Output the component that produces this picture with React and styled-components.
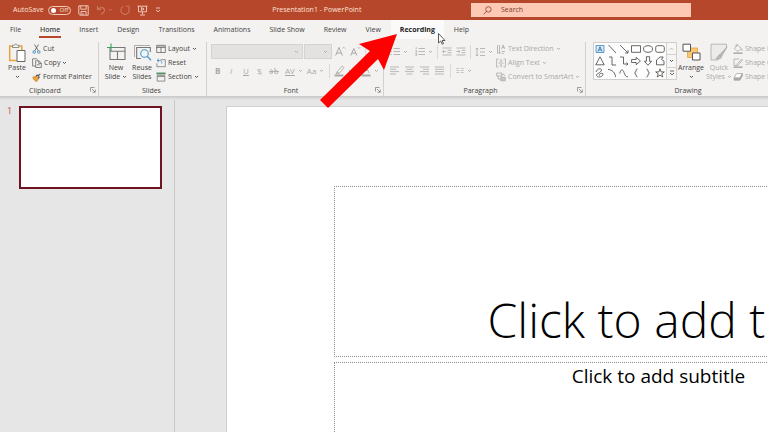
import React from "react";
import styled, { createGlobalStyle, css } from "styled-components";

const ink = "#444341";
const faded = "#a9a8a6";
const line = "#d2d0ce";

const GlobalStyle = createGlobalStyle`
  *, *::before, *::after { box-sizing: border-box; }
  html, body, #root { height: 100%; }
  body {
    margin: 0;
    overflow: hidden;
    background: #e6e6e6;
    color: ${ink};
    font: 7px/10px "Open Sans", "Noto Sans", sans-serif;
  }
  button, input, select { font: inherit; color: inherit; }
  button { padding: 0; border: 0; background: none; cursor: pointer; white-space: nowrap; }
  h1, h2, p { margin: 0; font-weight: inherit; }
`;

const Window = styled.div`
  position: relative;
  display: flex;
  flex-direction: column;
  min-height: 100vh;
  height: 100%;
  overflow: hidden;
`;

/* ---------- title bar ---------- */

const TitleBar = styled.header`
  display: flex;
  align-items: center;
  flex: none;
  height: 20px;
  padding-right: 77px;
  background: #b7472a;
  color: #fbe3da;
`;

const QuickAccess = styled.div`
  display: flex;
  align-items: center;
  gap: 7px;
  padding-left: 13px;
`;

const AutoSave = styled.label`
  display: flex;
  align-items: center;
  gap: 4px;
  white-space: nowrap;
`;

const Toggle = styled.span`
  display: flex;
  align-items: center;
  gap: 4px;
  width: 23px;
  height: 9px;
  padding: 0 2px;
  border: 1px solid #f1c9bb;
  border-radius: 5px;
  font-size: 6px;
`;

const ToggleInput = styled.input`
  appearance: none;
  flex: none;
  width: 5px;
  height: 5px;
  margin: 0;
  border-radius: 50%;
  background: #fff;
`;

const IconButton = styled.button`
  display: flex;
  align-items: center;
  gap: 2px;
  opacity: ${(p) => (p.$dim ? 0.3 : 1)};
`;

const DocumentName = styled.h1`
  flex: 1;
  padding-left: 2px;
  font-size: 7px;
  text-align: center;
`;

const SearchBox = styled.label`
  display: flex;
  align-items: center;
  gap: 9px;
  flex: 0 1 220px;
  height: 14px;
  padding-left: 12px;
  background: #fdc9b5;
  color: #8a3a26;
`;

const SearchInput = styled.input`
  flex: 1;
  min-width: 0;
  padding: 0;
  border: 0;
  outline: 0;
  background: none;
  &::placeholder { color: #7c3a2b; opacity: 1; }
`;

/* ---------- tabs ---------- */

const TabStrip = styled.nav`
  display: flex;
  gap: 1px;
  flex: none;
  height: 19px;
  padding-left: 1px;
  background: #f3f2f1;
`;

const Tab = styled.button`
  display: flex;
  align-items: center;
  padding: 0 8px;
  ${(p) => p.$hover && css`
    background: #fbfafa;
    color: #222;
    font-weight: 700;
  `}
  ${(p) => p.$active && css`font-weight: 600;`}
`;

const TabText = styled.span`
  padding: 3px 1px 1px;
  line-height: 10px;
  border-bottom: 2px solid ${(p) => (p.$active ? "#b7472a" : "transparent")};
`;

/* ---------- ribbon ---------- */

const Ribbon = styled.section`
  position: relative;
  display: flex;
  flex: none;
  height: 57px;
  background: #f3f2f1;
  overflow: hidden;
`;

const RibbonEdge = styled.div`
  flex: none;
  height: 4px;
  background: linear-gradient(#c9c8c7, #e6e6e6);
`;

const Group = styled.section`
  display: flex;
  flex-direction: column;
  justify-content: space-between;
  flex: 0 0 ${(p) => p.$width}px;
  margin: 3px 0 0;
  border-right: 1px solid ${line};
`;

const GroupBody = styled.div`
  display: flex;
  align-items: flex-start;
  gap: ${(p) => p.$gap || 0}px;
  padding-left: ${(p) => p.$pad || 0}px;
  height: 43px;
`;

const GroupFooter = styled.footer`
  display: flex;
  align-items: center;
  padding-right: 2px;
  height: 10px;
`;

const GroupName = styled.h2`
  flex: 1;
  font-size: 7px;
  text-align: center;
`;

const BigButton = styled.button`
  display: flex;
  flex-direction: column;
  align-items: center;
  width: ${(p) => p.$width || 24}px;
  color: ${(p) => (p.disabled ? faded : "inherit")};
`;

const BigArt = styled.span`
  display: flex;
  align-items: flex-start;
  height: 21px;
  padding-top: 1px;
`;

const BigLabel = styled.span`
  display: flex;
  align-items: center;
  justify-content: center;
  gap: 2px;
  min-height: 9px;
  line-height: 9px;
`;

const Stack = styled.div`
  display: flex;
  flex-direction: column;
`;

const RowButton = styled.button`
  display: flex;
  align-items: center;
  gap: 2px;
  height: 14px;
  color: ${(p) => (p.disabled ? faded : "inherit")};
`;

const ToolRow = styled.div`
  display: flex;
  align-items: center;
  gap: ${(p) => p.$gap || 0}px;
  height: 19px;
  padding-left: ${(p) => p.$pad || 0}px;
  color: ${faded};
`;

const Tool = styled.button`
  display: flex;
  align-items: center;
  justify-content: flex-start;
  gap: 3px;
  min-width: ${(p) => p.$width || 10}px;
  padding-left: ${(p) => p.$inset || 0}px;
  font-size: 8px;
  font-weight: ${(p) => (p.$bold ? 700 : 400)};
  font-style: ${(p) => (p.$italic ? "italic" : "normal")};
  text-decoration: ${(p) => p.$decoration || "none"};
  text-shadow: ${(p) => (p.$shadow ? "1px 1px 1px #ccc" : "none")};
  color: ${faded};
`;

const Divider = styled.span`
  width: 1px;
  height: 14px;
  background: #dad9d8;
`;

const ComboWrap = styled.label`
  display: flex;
  align-items: center;
  width: ${(p) => p.$width}px;
  height: 15px;
  padding-right: 3px;
  border: 1px solid #d4d3d2;
  background: #e3e2e1;
`;

const Combo = styled.select`
  appearance: none;
  flex: 1;
  min-width: 0;
  height: 100%;
  padding: 0;
  border: 0;
  background: transparent;
`;

const Gallery = styled.div`
  display: flex;
  width: 84px;
  height: 38px;
  border: 1px solid #d0cfce;
  background: #fdfdfd;
`;

const ShapeGrid = styled.div`
  display: grid;
  grid-template-columns: repeat(6, 12px);
  grid-auto-rows: 12px;
  flex: 1;
`;

const ShapeButton = styled.button`
  display: grid;
  place-items: center;
`;

const GalleryScroll = styled.div`
  display: grid;
  grid-template-rows: repeat(3, 1fr);
  gap: 1px;
  width: 10px;
  border-left: 1px solid ${line};
  background: ${line};
`;

const ScrollButton = styled.button`
  display: grid;
  place-items: center;
  background: #f7f6f5;
  color: ${(p) => (p.disabled ? faded : ink)};
`;

/* ---------- workspace ---------- */

const Workspace = styled.main`
  display: flex;
  flex: 1;
  min-height: 0;
`;

const ThumbPane = styled.aside`
  display: flex;
  align-items: flex-start;
  gap: 6px;
  flex: 0 0 175px;
  padding: 6px 0 0 7px;
  border-right: 1px solid #c9c9c9;
`;

const ThumbNumber = styled.span`
  width: 6px;
  color: #d0533f;
  font-size: 9px;
`;

const Thumb = styled.button`
  width: 143px;
  aspect-ratio: 143 / 83;
  border: 2px solid #6e1420;
  background: #fff;
`;

const Canvas = styled.div`
  flex: 1;
  min-width: 0;
  padding: 6px 0 0 51px;
  overflow: hidden;
`;

const Slide = styled.article`
  display: flex;
  flex-direction: column;
  gap: 5px;
  width: 865px;
  aspect-ratio: 16 / 9;
  padding: 79px 107px;
  border: 1px solid #cfcfcf;
  background: #fff;
  color: #000;
`;

const Placeholder = styled.div`
  display: flex;
  justify-content: center;
  align-items: ${(p) => p.$align};
  height: ${(p) => p.$height}px;
  flex: none;
  border: 1px dotted #8c8c8c;
  padding-bottom: ${(p) => p.$bottom || 0}px;
`;

const SlideTitle = styled.h1`
  font: 300 48px/60px "Open Sans", "Noto Sans", sans-serif;
  white-space: nowrap;
`;

const SlideSubtitle = styled.p`
  font: 400 19px/26px "Open Sans", "Noto Sans", sans-serif;
  white-space: nowrap;
`;

const Overlay = styled.svg`
  position: absolute;
  left: 316px;
  top: 28px;
  pointer-events: none;
`;

/* ---------- icons ---------- */

const Svg = ({ w = 10, h = 10, children, stroke = "currentColor", ...rest }) => (
  <svg width={w} height={h} viewBox={`0 0 ${w} ${h}`} fill="none" stroke={stroke} strokeWidth="0.8" aria-hidden="true" {...rest}>
    {children}
  </svg>
);

const Chevron = () => (
  <Svg w={5} h={4}><path d="M1 1l1.5 1.5L4 1" strokeWidth="0.9" /></Svg>
);

const Launcher = () => (
  <Svg w={6} h={6} stroke="#777"><path d="M.5 4.5v-4h4M2 2l3 3M5.3 2.5v2.8H2.5" strokeWidth="0.7" /></Svg>
);

const SaveIcon = () => (
  <Svg w={11} h={11}><path d="M.8.8h9.4v9.4H2L.8 9zM2.8 1v3.2h5.4V1M3 10V6.5h5V10M5 8v1.8" /></Svg>
);
const UndoIcon = () => (
  <Svg w={10} h={10}><path d="M1.5 1v3.5H5M1.8 4.3C4 1.6 8.6 2.2 8.5 5.5 8.4 7.4 6.5 8.5 5 9.5" strokeWidth="1.1" /></Svg>
);
const RedoIcon = () => (
  <Svg w={10} h={10}><path d="M6 1.2h3v3M8.6 3.2A4.1 4.1 0 1 1 3.4 1.5" strokeWidth="1.1" /></Svg>
);
const PresentIcon = () => (
  <Svg w={11} h={11}>
    <path d="M.5 1.2h10M1.5 1.2v5.6h8V1.2M5.5 7v2.5M3 10h5" />
    <path d="M4.5 2.5v3l2.6-1.5z" />
  </Svg>
);
const CustomizeIcon = () => (
  <Svg w={6} h={6}><path d="M1 1h4M1 3l2 1.8L5 3" /></Svg>
);
const SearchIcon = () => (
  <Svg w={9} h={9}><circle cx="5.4" cy="3.4" r="2.7" /><path d="M3.5 5.4L.7 8.3" /></Svg>
);

const PasteIcon = () => (
  <Svg w={18} h={20}>
    <path d="M4.5 3H1.7v14.5h8" stroke="#e7a33b" strokeWidth="1.5" />
    <path d="M11 3h2.8v4" stroke="#e7a33b" strokeWidth="1.5" />
    <path d="M4.5 4.5V2.3h1.7C6.5.8 9 .8 9.3 2.3H11v2.2z" fill="#f3f2f1" stroke="#777" />
    <path d="M9 7.5h8v11H9z" fill="#fff" stroke="#666" strokeWidth="1" />
  </Svg>
);
const CutIcon = () => (
  <Svg w={9} h={10}>
    <path d="M2.5.5l3.8 6.3M6.5.5L2.7 6.8" stroke="#555" />
    <circle cx="2.2" cy="8" r="1.3" stroke="#3a82bd" /><circle cx="6.8" cy="8" r="1.3" stroke="#3a82bd" />
  </Svg>
);
const CopyIcon = () => (
  <Svg w={10} h={10} stroke="#666"><path d="M3.5 8H.6V.8h4l1 1M3.7 2.8H7L9.3 5v4.5H3.7zM6.8 3v2.4h2.5M5 6.8h2.6" /></Svg>
);
const PainterIcon = () => (
  <Svg w={9} h={9}>
    <path d="M.8 4.2l3.5-1 2.2 2.6-1.8 2.7C2.9 8 1.4 6.5.8 4.2z" fill="#eda43c" stroke="#c57e22" />
    <path d="M4 3l1.2-1 2 2.2-.9 1.1M6.3 2.7L8.3.8" stroke="#555" strokeWidth="1.1" />
  </Svg>
);
const NewSlideIcon = () => (
  <Svg w={19} h={18}>
    <path d="M3 4.5h15v12H3zM3 8.2h15M10.5 8.2v8.3" stroke="#777" strokeWidth="1.1" />
    <path d="M4 .5v8M0 4.5h8" stroke="#3f9f5c" strokeWidth="1.1" />
  </Svg>
);
const ReuseIcon = () => (
  <Svg w={19} h={18}>
    <path d="M1.5 14V2.5H17" stroke="#999" />
    <path d="M8 15.5H3.7v-11h13.6V9" stroke="#777" strokeWidth="1.1" />
    <circle cx="11.5" cy="10.5" r="3.8" fill="#eef6fb" stroke="#4d9ac4" strokeWidth="1.1" />
    <path d="M14.2 13.3l3.8 3.9" stroke="#4d9ac4" strokeWidth="1.3" />
  </Svg>
);
const LayoutIcon = () => (
  <Svg w={10} h={10} stroke="#666"><path d="M.7 1.3h8.6v7.2H.7zM.7 3.5h8.6M5 3.5v5" /><path d="M1 2.3h8" stroke="#999" /></Svg>
);
const ResetIcon = () => (
  <Svg w={10} h={10} stroke="#777">
    <path d="M4.5 1.7h4.8v7H.9V5.4" /><path d="M3 .8L1 2.5l2 1.7M1.2 2.5h2.3c2 0 2.6 1.5 2.2 3" stroke="#3b86c0" />
  </Svg>
);
const SectionIcon = () => (
  <Svg w={10} h={10} stroke="#777">
    <path d="M.7.8h8.6v1.4H.7z" fill="#58906a" stroke="#58906a" strokeWidth="0.5" />
    <path d="M1.2 3.6h7.6v5.5H1.2zM1.2 4.6h7.6" />
  </Svg>
);

const FontSizeIcon = ({ down }) => (
  <Svg w={11} h={11}>
    <path d={down ? "M.8 9.5L3.8 2.5l3 7M1.8 7.2h4" : "M.6 9.5L4 1.5l3.4 8M1.8 7h4.4"} strokeWidth="1" />
    <path d={down ? "M7.5 1.2L8.8 2.5l1.3-1.3" : "M7.5 2.5l1.3-1.3 1.3 1.3"} />
  </Svg>
);
const StrikeIcon = () => (
  <Svg w={10} h={8}><path d="M0 4.5h10" /><path d="M1 3.2c1-.9 2.3-.5 2.3.7v2.6M3.3 4.5c-3-.2-3.2 2-1.4 2 .8 0 1.4-.5 1.4-1.2M5.8.8v5.7M5.8 4c.7-1.3 3-.9 3 1.2S6.4 7.2 5.8 5.6" /></Svg>
);
const HighlighterIcon = () => (
  <Svg w={11} h={12}><path d="M3 7l5-6 2 1.6L5.4 8.2zM3 7l-1 1.6 3.4-.4" /><path d="M.5 10.5h9" strokeWidth="2" /></Svg>
);
const FontColorIcon = () => (
  <Svg w={10} h={12}><path d="M2 8l3-7 3 7M3.2 5.5h3.6" /><path d="M.5 10.5h9" strokeWidth="2" /></Svg>
);

const BulletsIcon = () => (
  <Svg w={10} h={9}><path d="M3.5 1.5H10M3.5 4.5H10M3.5 7.5H10M.3 1.5h1.5M.3 4.5h1.5M.3 7.5h1.5" /></Svg>
);
const NumbersIcon = () => (
  <Svg w={10} h={9}><path d="M3.5 1.5H10M3.5 4.5H10M3.5 7.5H10M1.2.2v2M.4 3.6h1.2v1.6H.4M.4 6.5h1.2v2H.4" /></Svg>
);
const IndentIcon = ({ more }) => (
  <Svg w={10} h={9}><path d="M.5 1h9M.5 8h9M5.5 3.3h4M5.5 5.7h4" /><path d={more ? "M.4 4.5h3.5M2.6 3.2L4 4.5 2.6 5.8" : "M.6 4.5h3.5M2 3.2L.6 4.5 2 5.8"} /></Svg>
);
const SpacingIcon = () => (
  <Svg w={10} h={10}><path d="M5 1.5h5M5 5h5M5 8.5h5M2 1v8M.6 2.4L2 .9l1.4 1.5M.6 7.6L2 9.1l1.4-1.5" /></Svg>
);
const alignPaths = {
  left: "M0 1h9M0 3.3h6M0 5.6h9M0 8h6",
  center: "M0 1h9M1.5 3.3h6M0 5.6h9M1.5 8h6",
  right: "M0 1h9M3 3.3h6M0 5.6h9M3 8h6",
  justify: "M0 1h9M0 3.3h9M0 5.6h9M0 8h9",
};
const AlignIcon = ({ kind }) => <Svg w={9} h={9}><path d={alignPaths[kind]} /></Svg>;
const ColumnsIcon = () => (
  <Svg w={8} h={9}><path d="M.3 2.5h3M4.7 2.5h3M.3 4.5h3M4.7 4.5h3M.3 6.5h3M4.7 6.5h3" strokeWidth="0.6" /></Svg>
);
const TextDirectionIcon = () => (
  <Svg w={10} h={11}><path d="M1.5 1v8.5M3.5 1v8.5M2.5 8.5l1 1.3 1-1.3M5.6 5L7.2.9 8.8 5M6.2 3.6h2M5.7 7.5h3.2M5.7 9.5h2" /></Svg>
);
const AlignTextIcon = () => (
  <Svg w={10} h={10}><path d="M2.5 1H.6v8h1.9M7.5 1h1.9v8H7.5M5 .8v2.7M5 6.5v2.7M4 2.5l1 1 1-1M4 7.5l1-1 1 1M2.5 5h5" /></Svg>
);
const SmartArtIcon = () => (
  <Svg w={10} h={10}><path d="M.7 1h5v3h-5zM2 4v3h2.5M5.7 2.5h1.8" /><path d="M4.8 5.2h4.4v3.6H4.8zM7.3 2L9 3.5" fill="#c9c8c7" /></Svg>
);

const shapes = [
  ["Text box", <><path d="M1 1.5h8v7H1z" stroke="#3b86c0" fill="#dcecf7" /><path d="M3 7.5L5 2.7l2 4.8M3.7 6h2.6" stroke="#26689c" /></>],
  ["Line", <path d="M1.5 1l7.5 8" />],
  ["Line arrow", <path d="M1 1l8 8M9 6.2V9H6.2" />],
  ["Rectangle", <path d="M.5 1.7h9v6.6h-9z" />],
  ["Oval", <ellipse cx="5" cy="5" rx="4.5" ry="3.3" />],
  ["Rounded rectangle", <rect x=".7" y="1.7" width="8.6" height="6.6" rx="1.8" />],
  ["Triangle", <path d="M5 .8l4.2 8H.8z" />],
  ["Elbow connector", <path d="M2 1h3v8h4" />],
  ["Elbow arrow connector", <path d="M1 1h3.5v7H9M7.5 6.5L9 8 7.5 9.5" />],
  ["Right arrow", <path d="M.6 3.5h4.6V1.3L9.4 5 5.2 8.7V6.5H.6z" />],
  ["Down arrow", <path d="M3.4.7h3.2v4.6h2L5 9.3 1.4 5.3h2z" />],
  ["Freeform shape", <path d="M1.5 8.8V4L5 1h3.2L6.5 3.5 9 5.2v3.6z" />],
  ["Scribble", <path d="M1 4c2-5 7-3.5 5-.8S.6 5.6 1.8 8c1.5 2 6 .6 6.2-1.5S4 5 4.5 7.5" />],
  ["Curve", <path d="M1 1.5C5 1.5 8.5 5 8.5 9" />],
  ["Curved connector", <path d="M.8 5.5C1.8.5 4 1.2 5 4.5s1.8 4 4 4.5" />],
  ["Left brace", <path d="M6.500 1C4.200 1 5.800 4.600 3.500 5 5.800 5.400 4.200 9 6.500 9" />],
  ["Right brace", <path d="M3.500 1c2.300 0 .7 3.600 3 4-2.300.4-.7 4-3 4" />],
  ["Star", <path d="M5 .8l1.1 3.1h3.2L6.8 5.8l1 3.2L5 7.1 2.2 9l1-3.2L.7 3.9h3.2z" />],
];

const ArrangeIcon = () => (
  <Svg w={19} h={18}>
    <path d="M5.5 5h10v9.5h-10z" fill="#f9c673" stroke="#e7a33b" />
    <path d="M1 1.2h7.5v7H1zM10.5 10h7.5v7h-7.5z" fill="#fff" stroke="#555" strokeWidth="1" />
  </Svg>
);
const QuickStylesIcon = () => (
  <Svg w={18} h={18}>
    <path d="M8 17H1V1.2h15.5V5" fill="#ecebea" />
    <path d="M17 4L10 11.5l1.7 1.7zM9.8 11.8c-2 .2-1.5 2.7-4 3.8 2.8 1.3 5.7.3 5.7-2.3z" fill="#bdbcbb" />
  </Svg>
);
const FillIcon = () => (
  <Svg w={10} h={10}><path d="M4.5 1l4 3.5-3.7 3-3.5-3zM3 3V.8h1.8M9 5v2" /><path d="M.5 9.2h9" strokeWidth="1.5" /></Svg>
);
const OutlineIcon = () => (
  <Svg w={10} h={10}><path d="M6 1H1v6.5h2M8.8 1L4 6.3 3.5 8l1.7-.6L9.5 2z" /><path d="M.5 9.2h9" strokeWidth="1.5" /></Svg>
);
const EffectsIcon = () => (
  <Svg w={10} h={10}><path d="M3.5 1.5h5.8L7 6H1z" fill="#fff" /><path d="M1 6v2.2h6L9.3 4V1.5L7 6z" fill="#aaa9a7" /></Svg>
);

const tabs = ["File", "Home", "Insert", "Design", "Transitions", "Animations", "Slide Show", "Review", "View", "Recording", "Help"];

function Footer({ name, launcher }) {
  return (
    <GroupFooter>
      <GroupName>{name}</GroupName>
      {launcher && <button aria-label={`${name} settings`}><Launcher /></button>}
    </GroupFooter>
  );
}

function MenuRow({ icon, label, menu, disabled }) {
  return (
    <RowButton disabled={disabled}>
      {icon}
      <span>{label}</span>
      {menu && <Chevron />}
    </RowButton>
  );
}

export default function App() {
  return (
    <Window>
      <GlobalStyle />
      <TitleBar>
        <QuickAccess>
          <AutoSave>
            AutoSave
            <Toggle><ToggleInput type="checkbox" role="switch" />Off</Toggle>
          </AutoSave>
          <IconButton aria-label="Save"><SaveIcon /></IconButton>
          <IconButton aria-label="Undo" $dim><UndoIcon /><Chevron /></IconButton>
          <IconButton aria-label="Redo" $dim><RedoIcon /></IconButton>
          <IconButton aria-label="Start slide show"><PresentIcon /></IconButton>
          <IconButton aria-label="Customize toolbar"><CustomizeIcon /></IconButton>
        </QuickAccess>
        <DocumentName>Presentation1 - PowerPoint</DocumentName>
        <SearchBox>
          <SearchIcon />
          <SearchInput type="text" aria-label="Search" placeholder="Search" />
        </SearchBox>
      </TitleBar>

      <TabStrip>
        {tabs.map((t) => (
          <Tab key={t} $active={t === "Home"} $hover={t === "Recording"}>
            <TabText $active={t === "Home"}>{t}</TabText>
          </Tab>
        ))}
      </TabStrip>

      <Ribbon>
        <Group $width={99}>
          <GroupBody $pad={5} $gap={3}>
            <BigButton>
              <BigArt><PasteIcon /></BigArt>
              <BigLabel>Paste</BigLabel>
              <BigLabel><Chevron /></BigLabel>
            </BigButton>
            <Stack>
              <MenuRow icon={<CutIcon />} label="Cut" />
              <MenuRow icon={<CopyIcon />} label="Copy" menu />
              <MenuRow icon={<PainterIcon />} label="Format Painter" />
            </Stack>
          </GroupBody>
          <Footer name="Clipboard" launcher />
        </Group>

        <Group $width={108}>
          <GroupBody $pad={5} $gap={2}>
            <BigButton>
              <BigArt><NewSlideIcon /></BigArt>
              <BigLabel>New</BigLabel>
              <BigLabel>Slide<Chevron /></BigLabel>
            </BigButton>
            <BigButton>
              <BigArt><ReuseIcon /></BigArt>
              <BigLabel>Reuse</BigLabel>
              <BigLabel>Slides</BigLabel>
            </BigButton>
            <Stack>
              <MenuRow icon={<LayoutIcon />} label="Layout" menu />
              <MenuRow icon={<ResetIcon />} label="Reset" />
              <MenuRow icon={<SectionIcon />} label="Section" menu />
            </Stack>
          </GroupBody>
          <Footer name="Slides" />
        </Group>

        <Group $width={177}>
          <GroupBody $pad={4}>
            <Stack>
              <ToolRow $gap={1}>
                <ComboWrap $width={92}>
                  <Combo aria-label="Font" disabled /><Chevron />
                </ComboWrap>
                <ComboWrap $width={28}>
                  <Combo aria-label="Font size" disabled /><Chevron />
                </ComboWrap>
                <ToolRow $gap={4} $pad={2}>
                  <Tool><FontSizeIcon /></Tool>
                  <Tool><FontSizeIcon down /></Tool>
                  <Divider />
                </ToolRow>
              </ToolRow>
              <ToolRow $gap={4} $pad={2}>
                <Tool $bold $inset={2}>B</Tool>
                <Tool $italic $inset={3}>I</Tool>
                <Tool $decoration="underline" $inset={2}>U</Tool>
                <Tool $shadow $inset={2}>S</Tool>
                <Tool><StrikeIcon /></Tool>
                <Tool $width={18} $inset={2} $decoration="underline">AV<Chevron /></Tool>
                <Tool $width={18}>Aa<Chevron /></Tool>
                <Divider />
                <Tool $width={23}><HighlighterIcon /><Chevron /></Tool>
                <Tool><FontColorIcon /><Chevron /></Tool>
              </ToolRow>
            </Stack>
          </GroupBody>
          <Footer name="Font" launcher />
        </Group>

        <Group $width={202}>
          <GroupBody $pad={6} $gap={3}>
            <Stack>
              <ToolRow $gap={4}>
                <Tool $width={21}><BulletsIcon /><Chevron /></Tool>
                <Tool $width={18}><NumbersIcon /><Chevron /></Tool>
                <Divider />
                <Tool><IndentIcon /></Tool>
                <Tool><IndentIcon more /></Tool>
                <Divider />
                <Tool><SpacingIcon /><Chevron /></Tool>
              </ToolRow>
              <ToolRow $gap={5}>
                <Tool><AlignIcon kind="left" /></Tool>
                <Tool><AlignIcon kind="center" /></Tool>
                <Tool><AlignIcon kind="right" /></Tool>
                <Tool><AlignIcon kind="justify" /></Tool>
                <Divider />
                <Tool><ColumnsIcon /><Chevron /></Tool>
              </ToolRow>
            </Stack>
            <Stack>
              <MenuRow icon={<TextDirectionIcon />} label="Text Direction" menu disabled />
              <MenuRow icon={<AlignTextIcon />} label="Align Text" menu disabled />
              <MenuRow icon={<SmartArtIcon />} label="Convert to SmartArt" menu disabled />
            </Stack>
          </GroupBody>
          <Footer name="Paragraph" launcher />
        </Group>

        <Group $width={212}>
          <GroupBody $pad={7}>
            <Gallery>
              <ShapeGrid>
                {shapes.map(([name, art]) => (
                  <ShapeButton key={name} aria-label={name}><Svg>{art}</Svg></ShapeButton>
                ))}
              </ShapeGrid>
              <GalleryScroll>
                <ScrollButton aria-label="Previous shapes" disabled>
                  <Svg w={5} h={4}><path d="M1 2.5L2.5 1 4 2.5" /></Svg>
                </ScrollButton>
                <ScrollButton aria-label="More shapes"><Chevron /></ScrollButton>
                <ScrollButton aria-label="All shapes"><CustomizeIcon /></ScrollButton>
              </GalleryScroll>
            </Gallery>
            <BigButton $width={28}>
              <BigArt><ArrangeIcon /></BigArt>
              <BigLabel>Arrange</BigLabel>
              <BigLabel><Chevron /></BigLabel>
            </BigButton>
            <BigButton $width={28} disabled>
              <BigArt><QuickStylesIcon /></BigArt>
              <BigLabel>Quick</BigLabel>
              <BigLabel>Styles<Chevron /></BigLabel>
            </BigButton>
            <Stack>
              <MenuRow icon={<FillIcon />} label="Shape Fill" menu disabled />
              <MenuRow icon={<OutlineIcon />} label="Shape Outline" menu disabled />
              <MenuRow icon={<EffectsIcon />} label="Shape Effects" menu disabled />
            </Stack>
          </GroupBody>
          <Footer name="Drawing" launcher />
        </Group>
      </Ribbon>
      <RibbonEdge />

      <Workspace>
        <ThumbPane>
          <ThumbNumber>1</ThumbNumber>
          <Thumb aria-label="Slide 1" />
        </ThumbPane>
        <Canvas>
          <Slide>
            <Placeholder $align="flex-end" $height={171} $bottom={6}>
              <SlideTitle>Click to add title</SlideTitle>
            </Placeholder>
            <Placeholder $align="flex-start" $height={118}>
              <SlideSubtitle>Click to add subtitle</SlideSubtitle>
            </Placeholder>
          </Slide>
        </Canvas>
      </Workspace>

      <Overlay width="132" height="84" viewBox="316 28 132 84" aria-hidden="true">
        <path d="M397 34L359 44l11 7-50 49 8 8 50-49 6 11z" fill="#fe0000" />
        <path d="M438.500 33.500v9.500l2.200-2 1.500 3.200 1.300-.6-1.400-3.100h2.900z" fill="#fff" stroke="#333" strokeWidth="0.8" />
      </Overlay>
    </Window>
  );
}
